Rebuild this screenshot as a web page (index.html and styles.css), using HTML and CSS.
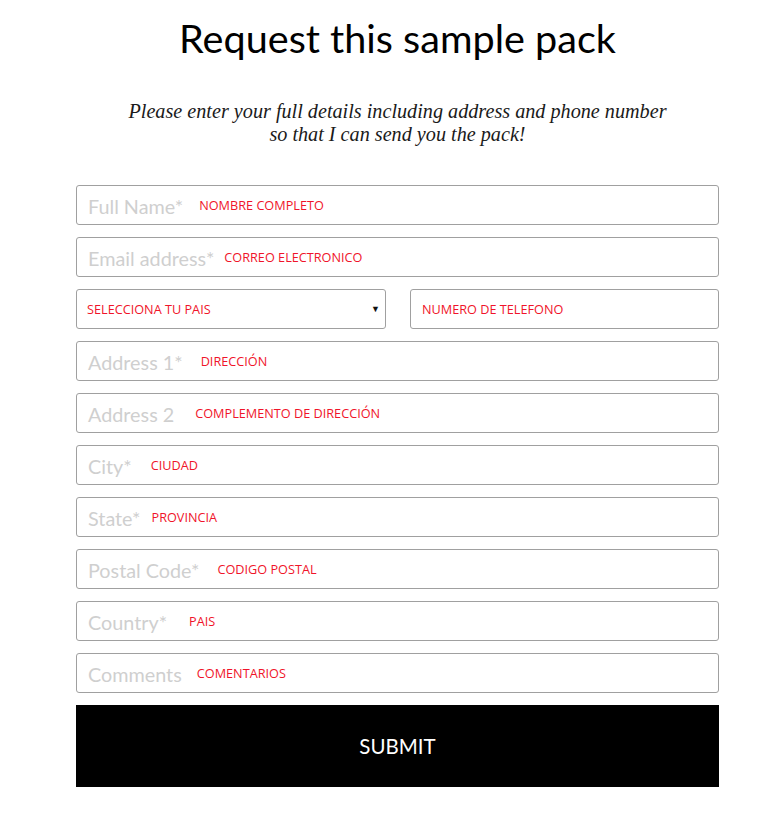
FILE: index.html
```html
<!DOCTYPE html>
<html>
<head>
<meta charset="utf-8">
<link rel="stylesheet" href="styles.css">
</head>
<body>
<div class="page">
  <h1 class="title">Request this sample pack</h1>
  <p class="intro">Please enter your full details including address and phone number<br>so that I can send you the pack!</p>
  <form class="form">
    <div class="field"><span class="ph">Full Name*</span><span class="tag g16">NOMBRE COMPLETO</span></div>
    <div class="field"><span class="ph">Email address*</span><span class="tag g10">CORREO ELECTRONICO</span></div>
    <div class="pair">
      <div class="field select"><span class="tag">SELECCIONA TU PAIS</span><span class="arrow">&#9660;</span></div>
      <div class="field phone"><span class="tag">NUMERO DE TELEFONO</span></div>
    </div>
    <div class="field"><span class="ph">Address 1*</span><span class="tag g18">DIRECCIÓN</span></div>
    <div class="field"><span class="ph">Address 2</span><span class="tag g21">COMPLEMENTO DE DIRECCIÓN</span></div>
    <div class="field"><span class="ph">City*</span><span class="tag g19">CIUDAD</span></div>
    <div class="field"><span class="ph">State*</span><span class="tag g11">PROVINCIA</span></div>
    <div class="field"><span class="ph">Postal Code*</span><span class="tag g18">CODIGO POSTAL</span></div>
    <div class="field"><span class="ph">Country*</span><span class="tag g22">PAIS</span></div>
    <div class="field"><span class="ph">Comments</span><span class="tag g15">COMENTARIOS</span></div>
    <div class="submit">SUBMIT</div>
  </form>
</div>
</body>
</html>
```
FILE: styles.css
```css
html, body {
  margin: 0;
  padding: 0;
  background: #fff;
}
.page {
  width: 643px;
  margin-left: 76px;
}
.title {
  margin: 14px 0 0;
  font-family: Lato, "Liberation Sans", sans-serif;
  font-weight: 400;
  font-size: 39.6px;
  line-height: 48px;
  text-align: center;
  color: #000;
}
.intro {
  margin: 38px 0 0;
  font-family: "Liberation Serif", serif;
  font-style: italic;
  font-size: 20.2px;
  line-height: 23px;
  text-align: center;
  color: #1a1a1a;
}
.form {
  margin-top: 39px;
  display: flex;
  flex-direction: column;
  gap: 12px;
}
.field {
  box-sizing: border-box;
  height: 40px;
  border: 1px solid #a0a0a0;
  border-radius: 3px;
  display: flex;
  align-items: center;
  padding: 0 11px;
}
.ph {
  font-family: Lato, "Liberation Sans", sans-serif;
  font-size: 19.8px;
  color: #cfcfcf;
  margin-top: 2px;
}
.tag {
  font-family: "Open Sans", "Noto Sans", sans-serif;
  font-size: 12.7px;
  color: #f0142a;
  margin-top: -1px;
}
.g10 { margin-left: 10px; }
.g11 { margin-left: 11px; }
.g15 { margin-left: 15px; }
.g16 { margin-left: 16px; }
.g18 { margin-left: 18px; }
.g19 { margin-left: 19px; }
.g21 { margin-left: 21px; }
.g22 { margin-left: 22px; }
.pair {
  display: flex;
  gap: 24px;
}
.select {
  flex: 0 0 310px;
  justify-content: space-between;
  padding-left: 10px;
  padding-right: 5px;
}
.phone {
  flex: 1;
}
.arrow {
  font-size: 9px;
  color: #111;
}
.submit {
  height: 82px;
  background: #000;
  color: #fff;
  display: flex;
  align-items: center;
  justify-content: center;
  font-family: Lato, "Liberation Sans", sans-serif;
  font-size: 20.5px;
}
```
